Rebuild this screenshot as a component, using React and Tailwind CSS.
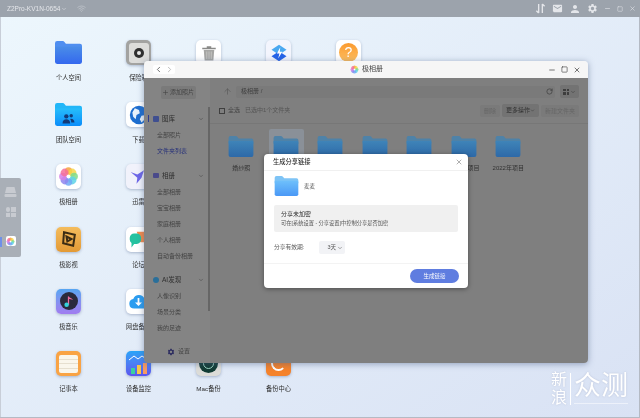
import { ChevronDown, ChevronLeft, ChevronRight, Plus, ArrowUp, RotateCw, X, Minus, Square, Wifi } from 'lucide-react';
import { MdEmail, MdPerson, MdSettings } from 'react-icons/md';

function Tile({ children, className = 'bg-white' }) {
  return (
    <div className={`w-[25px] h-[25px] rounded-[5px] overflow-hidden flex items-center justify-center shadow-[0_1px_3px_rgba(80,100,140,0.4)] ${className}`}>
      {children}
    </div>
  );
}

function Folder({ className = 'w-[26px] h-[22px]', top = '#4a8de8', bottom = '#3468ee', tab = '#4f8ef0' }) {
  const id = `f${top.slice(1)}${bottom.slice(1)}`;
  return (
    <svg viewBox="0 0 26 22" className={className}>
      <defs>
        <linearGradient id={id} x1="0" y1="0" x2="0" y2="1">
          <stop offset="0" stopColor={top} />
          <stop offset="1" stopColor={bottom} />
        </linearGradient>
      </defs>
      <path d="M0 2a2 2 0 0 1 2-2h5.5a2 2 0 0 1 1.6.8L10.5 2.5H24a2 2 0 0 1 2 2V8H0z" fill={tab} />
      <path d="M0 5.2h24.5a1.5 1.5 0 0 1 1.5 1.5V20a2 2 0 0 1-2 2H2a2 2 0 0 1-2-2z" fill={`url(#${id})`} />
    </svg>
  );
}

function PetalIcon({ size = 21 }) {
  const colors = ['#f7a13c', '#f7d64a', '#7fdc8a', '#5fd3e8', '#6ea8f5', '#8f86ee', '#d57fe8', '#f56f9a'];
  return (
    <svg viewBox="0 0 24 24" width={size} height={size}>
      {colors.map((c, i) => (
        <circle key={c} cx="12" cy="5.6" r="4.3" fill={c} opacity="0.85" transform={`rotate(${i * 45} 12 12)`} />
      ))}
      <circle cx="12" cy="12" r="2" fill="#fff" />
    </svg>
  );
}

const apps = [
  { label: '个人空间', icon: <div className="w-[27px] h-[25px] flex items-center justify-center"><Folder className="w-[27px] h-[23px]" /></div> },
  { label: '保险箱', icon: (
    <Tile className="bg-[#a3a3a1]">
      <div className="w-[20px] h-[20px] rounded-[3px] bg-[#dcdcda] flex items-center justify-center">
        <div className="w-[10px] h-[10px] rounded-full bg-[#2f2f2f] flex items-center justify-center">
          <div className="w-[4px] h-[4px] rounded-full bg-[#e8e8e8]" />
        </div>
      </div>
    </Tile>
  ) },
  { label: '回收站', icon: (
    <Tile>
      <svg viewBox="0 0 24 24" width="18" height="20">
        <path d="M3 5h18v2H3zM9 3h6v2H9z" fill="#8a8a88" />
        <path d="M5 8h14l-1.2 14H6.200z" fill="#a6a6a4" />
        <path d="M9 10v10M12 10v10M15 10v10" stroke="#d8d8d6" strokeWidth="0.8" />
      </svg>
    </Tile>
  ) },
  { label: '闪传', icon: (
    <Tile className="bg-[#f3f5fd]">
      <svg viewBox="0 0 24 24" width="20" height="20">
        <path d="M12 2l9 6-9 6-9-6z" fill="#4aa8f0" />
        <path d="M12 10l9 6-9 6-9-6z" fill="#2563e8" />
        <path d="M13.500 5l-4 7.500h3l-1.500 6 5-8h-3z" fill="#fff" />
      </svg>
    </Tile>
  ) },
  { label: '帮助中心', icon: (
    <Tile>
      <div className="w-[19px] h-[19px] rounded-full bg-gradient-to-b from-[#fb9a2c] to-[#fdc060] text-white text-[14px] leading-[19px] text-center">?</div>
    </Tile>
  ) },
  { label: '团队空间', icon: (
    <div className="relative w-[27px] h-[25px] flex items-center justify-center">
      <Folder className="w-[27px] h-[23px]" top="#26bdfb" bottom="#0b8dfa" tab="#22b6f8" />
      <svg viewBox="0 0 24 24" width="13" height="13" className="absolute left-[7px] top-[10px]">
        <circle cx="8" cy="8" r="4" fill="#123a78" />
        <path d="M1 21c0-5 3-7.500 7-7.500s7 2.500 7 7.500z" fill="#123a78" />
        <circle cx="17" cy="7" r="3.200" fill="#123a78" />
        <path d="M16.500 12.500c3.500 0 6.500 2 6.500 7h-6c0-3-.5-5-2-6.500z" fill="#123a78" />
      </svg>
    </div>
  ) },
  { label: '下载', icon: (
    <Tile>
      <svg viewBox="0 0 24 24" width="20" height="20">
        <circle cx="12" cy="12" r="11" fill="#1f6fd0" />
        <path d="M7 4l5 2 1 4-4 2-1 5-3-3-1-5zM15 13l5-1-1 5-4 4-2-4z" fill="#e8f2fb" />
      </svg>
    </Tile>
  ) },
  null,
  null,
  null,
  { label: '极相册', icon: <Tile><PetalIcon /></Tile> },
  { label: '迅雷', icon: (
    <Tile className="bg-[#f1f2fb]">
      <svg viewBox="0 0 24 24" width="20" height="20">
        <path d="M2 6l8 3 8-5-3 9-6 7 1-7z" fill="#6f68e8" />
      </svg>
    </Tile>
  ) },
  null,
  null,
  null,
  { label: '极影视', icon: (
    <Tile className="bg-gradient-to-b from-[#f4bc5c] to-[#e39a35]">
      <svg viewBox="0 0 24 24" width="20" height="20" fill="none" stroke="#3b2c14" strokeWidth="2.400">
        <path d="M6 4l13 3-2 13-12-3z" />
        <path d="M9 9l6 3-5 3z" />
      </svg>
    </Tile>
  ) },
  { label: '论坛', icon: (
    <Tile>
      <svg viewBox="0 0 24 24" width="21" height="21">
        <path d="M10 3h10a3 3 0 0 1 3 3v6a3 3 0 0 1-3 3h-6z" fill="#f58a4b" />
        <path d="M2 10a5 5 0 0 1 5-5h3a5 5 0 0 1 5 5v2a5 5 0 0 1-5 5H7l-3 4v-5a5 5 0 0 1-2-4z" fill="#25c2a0" />
      </svg>
    </Tile>
  ) },
  null,
  null,
  null,
  { label: '极音乐', icon: (
    <Tile className="bg-gradient-to-b from-[#55a6f2] to-[#a07cf0]">
      <div className="w-[18px] h-[18px] rounded-full bg-[#2a2a3c] flex items-center justify-center">
        <svg viewBox="0 0 24 24" width="15" height="15">
          <path d="M12 4v13" stroke="#f06ca0" strokeWidth="2" />
          <path d="M12 4c2 3 6 2 7 6-2-2-5-2-7-2z" fill="#f06ca0" />
          <circle cx="9" cy="17" r="3.600" fill="#35d0d8" />
        </svg>
      </div>
    </Tile>
  ) },
  { label: '网盘备份', icon: (
    <Tile>
      <svg viewBox="0 0 24 24" width="21" height="21">
        <path d="M7 20a5.500 5.500 0 0 1-1-10.900A7 7 0 0 1 19 9a5.500 5.500 0 0 1-1 11z" fill="#2b9df0" />
        <path d="M11 8h2v5h3l-4 4-4-4h3z" fill="#fff" />
      </svg>
    </Tile>
  ) },
  null,
  null,
  null,
  { label: '记事本', icon: (
    <Tile className="bg-[#f9a344]">
      <div className="w-[19px] h-[18px] mt-[1px] rounded-[2px] bg-[#faf6ec] flex flex-col justify-evenly">
        <div className="h-px bg-[#e6dfcf]" />
        <div className="h-px bg-[#e6dfcf]" />
        <div className="h-px bg-[#e6dfcf]" />
      </div>
    </Tile>
  ) },
  { label: '设备监控', icon: (
    <Tile className="bg-gradient-to-b from-[#27a4f8] to-[#5a54ee]">
      <svg viewBox="0 0 25 25" width="25" height="25">
        <path d="M3 9l5-4 4 3 4-3 6 4" fill="none" stroke="#fff" strokeWidth="1" />
        <rect x="5" y="17" width="4" height="6" fill="#3ad0a0" />
        <rect x="11" y="14" width="4" height="9" fill="#f7c548" />
        <rect x="17" y="12" width="4" height="11" fill="#f59a62" />
      </svg>
    </Tile>
  ) },
  { label: 'Mac备份', icon: (
    <Tile className="bg-[#dcdcd8]">
      <div className="w-[19px] h-[19px] rounded-full bg-[#123c34] flex items-center justify-center">
        <div className="w-[11px] h-[11px] rounded-full border border-[#9fd8c4]" />
      </div>
    </Tile>
  ) },
  { label: '备份中心', icon: (
    <Tile className="bg-[#f5822a]">
      <div className="w-[15px] h-[15px] rounded-full border-[2.5px] border-white border-r-transparent" />
    </Tile>
  ) },
];

const sideGroups = [
  { title: '图库', icon: 'lib', items: ['全部照片', '文件夹列表'] },
  { title: '相册', icon: 'album', items: ['全部相册', '宝宝相册', '家庭相册', '个人相册', '自动备份相册'] },
  { title: 'AI发现', icon: 'ai', items: ['人像识别', '场景分类', '我的足迹'] },
];

const folders = ['婚纱照', '', '', '', '', '2021年项目', '2022年项目'];

function Sidebar() {
  return (
    <div className="relative w-[66px] h-full bg-[#848484] flex flex-col shrink-0">
      <div className="flex justify-center pt-[8px]">
        <div className="w-[35px] h-[13px] ml-[2px] rounded-[2px] bg-[#7a7a7a] text-[6px] leading-[13px] text-[#454545] flex items-center justify-center gap-[1px]">
          <Plus size={7} />添加照片
        </div>
      </div>
      <div className="flex flex-col pt-[12px] gap-[8.500px]">
        {sideGroups.map((g) => (
          <div key={g.title} className="relative flex flex-col">
            {g.icon === 'lib' && <div className="absolute left-[4px] top-[4px] w-px h-[7px] bg-[#2d3a90]" />}
            <div className="h-[16px] flex items-center pl-[9px] pr-[2px] text-[6.500px] text-[#2e2e2e]">
              {g.icon === 'lib' && <div className="w-[6px] h-[6px] mr-[3px] bg-[#3f4f90] rounded-[1px]" />}
              {g.icon === 'album' && <div className="w-[6px] h-[5px] mr-[3px] bg-[#4a4a8a] rounded-[1px]" />}
              {g.icon === 'ai' && <div className="w-[6px] h-[6px] mr-[3px] bg-[#2a6f9a] rounded-full" />}
              <span className="flex-1">{g.title}</span>
              <ChevronDown size={6} className="text-[#444] mr-[4px]" />
            </div>
            {g.items.map((it) => (
              <div key={it} className={`h-[16px] leading-[16px] pl-[13px] text-[6px] ${it === '文件夹列表' ? 'text-[#27317a]' : 'text-[#444]'}`}>
                {it}
              </div>
            ))}
          </div>
        ))}
      </div>
      <div className="flex items-center pl-[23px] mt-[11px] gap-[3px] text-[6px] text-[#444]">
        <MdSettings size={8} className="text-[#2d2d60]" />设置
      </div>
      <div className="absolute right-0 top-[29px] h-[204px] w-[2px] bg-[#666]" />
    </div>
  );
}

function Main() {
  return (
    <div className="flex-1 h-full flex flex-col bg-[#7f7f7f]">
      <div className="flex items-center h-[15px] pl-[10px] pr-[9px] mt-[6px]">
        <ArrowUp size={9} className="text-[#5c5c5c] w-[15px]" />
        <div className="flex-1 h-[12px] ml-[1px] pl-[5px] pr-[2px] flex items-center justify-between rounded-[2px] bg-[#7a7a7a] text-[6px] text-[#3f3f3f]">
          <span>极相册 /</span>
          <RotateCw size={7} className="text-[#333]" />
        </div>
        <div className="w-[19px] h-[13px] ml-[5px] rounded-[2px] bg-[#737373] flex items-center justify-center gap-[1px]">
          <div className="grid grid-cols-2 gap-[1px]">
            <div className="w-[2.500px] h-[2.500px] bg-[#3d3d3d]" />
            <div className="w-[2.500px] h-[2.500px] bg-[#3d3d3d]" />
            <div className="w-[2.500px] h-[2.500px] bg-[#3d3d3d]" />
            <div className="w-[2.500px] h-[2.500px] bg-[#3d3d3d]" />
          </div>
          <ChevronDown size={6} className="text-[#3d3d3d]" />
        </div>
      </div>
      <div className="h-[25px] pb-[1px] pl-[9px] pr-[9px] flex items-center text-[6px] text-[#555] border-b border-[#777]">
        <div className="w-[6px] h-[6px] border border-[#3f3f3f] mr-[3px]" />
        <span className="mr-[5px] text-[#444]">全选</span>
        <span className="flex-1">已选中1个文件夹</span>
        <div className="h-[12px] px-[4px] leading-[12px] rounded-[2px] bg-[#7a7a7a] text-[#666]">删除</div>
        <div className="h-[13px] px-[4px] mx-[2px] rounded-[2px] bg-[#737373] text-[#333] flex items-center">更多操作<ChevronDown size={5} /></div>
        <div className="h-[12px] px-[4px] leading-[12px] rounded-[2px] bg-[#7a7a7a] text-[#666]">新建文件夹</div>
      </div>
      <div className="flex pl-[18px] pt-[5px]">
        {folders.map((f, i) => (
          <div key={i} className="relative w-[44.500px] h-[44px] flex flex-col items-center pt-[7px]">
            {i === 1 && <div className="absolute left-[-4px] top-0 w-[35px] h-[34px] rounded-[2px] bg-[#8a9098]" />}
            <div className="relative mr-[18px] flex flex-col items-center">
              <Folder className="w-[26px] h-[21px]" top="#3f84b8" bottom="#2d69a8" tab="#4e82a8" />
              <span className="absolute top-[28px] text-[6px] leading-[8px] whitespace-nowrap text-[#333]">{f}</span>
            </div>
          </div>
        ))}
      </div>
    </div>
  );
}

function ShareDialog() {
  return (
    <div className="absolute left-[120px] top-[93px] w-[204px] h-[134px] rounded-[4px] bg-white shadow-[0_1px_5px_rgba(0,0,0,0.4)] flex flex-col">
      <div className="h-[17px] pl-[9px] pr-[5px] flex items-center justify-between border-b border-[#f0f0f0] text-[6.250px] font-medium text-[#2e2e2e]">
        生成分享链接
        <X size={8} className="text-[#888]" />
      </div>
      <div className="flex items-center pl-[10px] pt-[5px] gap-[5px] text-[5.500px] text-[#555]">
        <Folder className="w-[25px] h-[20px]" top="#6ec0fb" bottom="#4a98f6" tab="#7ec4f6" />
        麦麦
      </div>
      <div className="mx-[10px] mt-[9px] h-[27px] px-[7px] flex flex-col justify-center rounded-[2px] bg-[#f0f0f0]">
        <div className="text-[6px] leading-[10px] text-[#2e2e2e]">分享未加密</div>
        <div className="text-[5.250px] leading-[9px] text-[#555]">可在[系统设置 - 分享设置]中控制分享是否加密</div>
      </div>
      <div className="flex items-center pl-[10px] mt-[9px] text-[5.750px] text-[#555]">
        <span className="w-[45px]">分享有效期:</span>
        <div className="w-[26px] h-[13px] rounded-[2px] bg-[#f2f3f6] flex items-center justify-end pr-[2px] gap-[1px] text-[5.500px]">
          3天<ChevronDown size={6} />
        </div>
      </div>
      <div className="flex-1 mt-[9px] border-t border-[#f3f3f3] flex items-center justify-end pr-[9px]">
        <div className="w-[49px] h-[14px] rounded-full bg-[#5f7de0] text-white text-[5.500px] leading-[14px] text-center">生成链接</div>
      </div>
    </div>
  );
}

function PhotoWindow() {
  return (
    <div className="absolute left-[144px] top-[61px] w-[444px] h-[302px] rounded-[4px] overflow-hidden flex flex-col shadow-[0_1px_6px_rgba(70,90,130,0.5)]">
      <div className="relative h-[17px] bg-[#f6f6f6] flex items-center shrink-0 pl-[9px] pr-[7px]">
        <div className="flex h-[9px] rounded-[2px] bg-white">
          <ChevronLeft size={9} className="text-[#444] w-[11px]" />
          <ChevronRight size={9} className="text-[#aaa] w-[11px]" />
        </div>
        <div className="flex-1 flex items-center justify-center gap-[3px] pl-[10px] text-[7px] text-[#444]">
          <PetalIcon size={9} />极相册
        </div>
        <div className="flex items-center gap-[5px] text-[#333]">
          <Minus size={8} />
          <Square size={7} />
          <X size={8} />
        </div>
      </div>
      <div className="relative flex-1 flex min-h-0">
        <Sidebar />
        <Main />
      </div>
      <ShareDialog />
    </div>
  );
}

export default function App() {
  return (
    <div className="relative w-[640px] h-[418px] overflow-hidden flex flex-col blur-[0.3px] bg-gradient-to-br from-[#edf7fd] to-[#d9e2f4] shadow-[inset_-1px_-1px_0_#b4bac4,inset_1px_0_0_#c8ced8] [font-family:'Liberation_Sans','Noto_Sans_CJK_SC',sans-serif]">
      <div className="h-[17px] shrink-0 bg-[#9ca3ac] flex items-center pl-[7px] pr-[4px] text-[#e4e6ea]">
        <span className="text-[6.500px]">Z2Pro-KV1N-0654</span>
        <ChevronDown size={6} className="ml-[1px]" />
        <Wifi size={9} className="ml-[10px] text-[#c0c5cc]" />
        <div className="flex-1" />
        <div className="flex items-center gap-[6px]">
          <svg viewBox="0 0 12 12" width="11" height="11" fill="none" stroke="currentColor" strokeWidth="1.500">
            <path d="M4 1v10M1.500 8.500 4 11M8 11V1M8 1l2.500 2.500" />
          </svg>
          <MdEmail size={11} />
          <MdPerson size={12} />
          <MdSettings size={11} />
          <Minus size={7} />
          <Square size={6} />
          <X size={7} />
        </div>
      </div>
      <div className="grid grid-cols-[repeat(5,70px)] auto-rows-[62.200px] pl-[33.500px] pt-[23px]">
        {apps.map((a, i) =>
          a ? (
            <div key={a.label} className="flex flex-col items-center gap-[8px] text-[6.250px] leading-[10px] text-[#2e2e2e]">
              {a.icon}
              <span>{a.label}</span>
            </div>
          ) : (
            <div key={i} />
          )
        )}
      </div>
      <PhotoWindow />
      <div className="absolute left-0 top-[178px] w-[21px] h-[79px] rounded-r-[2px] bg-[#a9afb7] flex flex-col items-center pt-[9px]">
        <svg viewBox="0 0 13 10" width="13" height="10" fill="#c8cbd1">
          <path d="M2.500 0h8l1.500 6H1z" />
          <rect x="0.500" y="7" width="12" height="3" rx="1" />
        </svg>
        <div className="grid grid-cols-2 gap-[1px] mt-[10px]">
          <div className="w-[4.500px] h-[4.500px] rounded-full bg-[#c8cbd1]" />
          <div className="w-[4.500px] h-[4.500px] bg-[#c8cbd1]" />
          <div className="w-[4.500px] h-[4.500px] bg-[#c8cbd1]" />
          <div className="w-[4.500px] h-[4.500px] bg-[#c8cbd1]" />
        </div>
        <div className="mt-[19px] w-[10px] h-[10px] rounded-[2px] bg-white flex items-center justify-center">
          <PetalIcon size={9} />
        </div>
        <div className="absolute left-0 top-[59px] w-[1.500px] h-[10px] bg-[#6f8fe8]" />
      </div>
      <div className="absolute left-[551px] top-[371px] flex items-start text-white [text-shadow:0_0_2px_rgba(120,130,160,0.35)]">
        <div className="flex flex-col text-[16px] leading-[18px] w-[18px]">
          <span>新</span>
          <span>浪</span>
        </div>
        <div className="w-px h-[32px] bg-white ml-[1px] mr-[3px] mt-[2px]" />
        <div className="flex flex-col">
          <span className="text-[27px] leading-[31px] tracking-[0px]">众测</span>
          <div className="h-px w-[54px] mt-[1px] bg-white/50" />
        </div>
      </div>
    </div>
  );
}
